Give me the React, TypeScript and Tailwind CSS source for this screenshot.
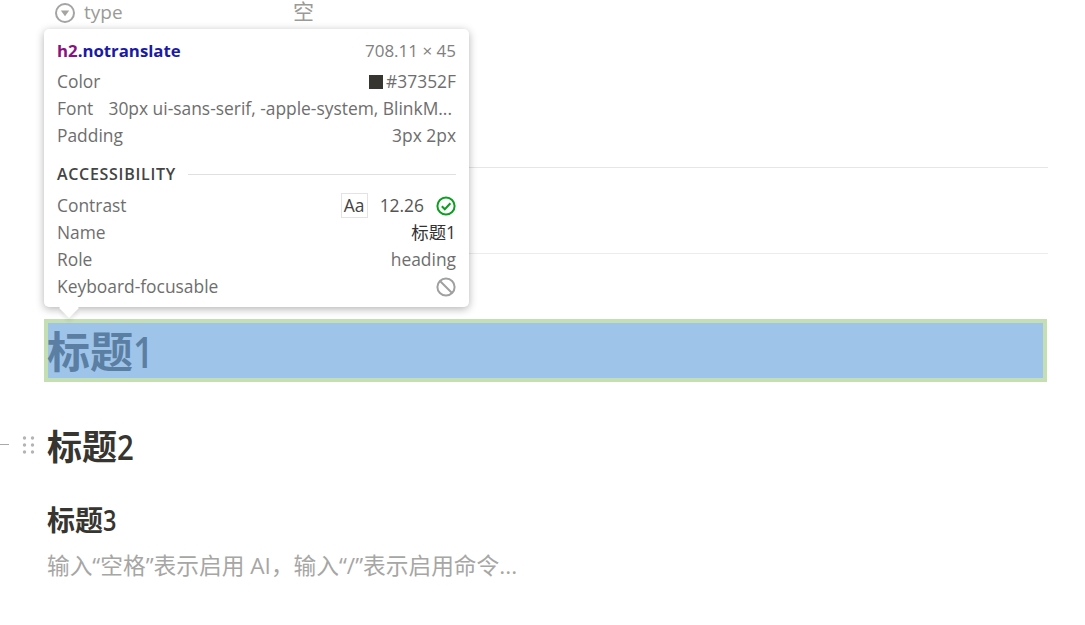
const sans = "font-['Open_Sans','Noto_Sans_CJK_SC',sans-serif]";

function Row({ label, children }: { label: string; children: React.ReactNode }) {
  return (
    <div className="flex h-[27px] items-center justify-between text-[#6e6e6e]">
      <span className="whitespace-nowrap">{label}</span>
      {children}
    </div>
  );
}

function Digit({ width, children }: { width: string; children: React.ReactNode }) {
  return <span className={`inline-block origin-left scale-x-[0.84] font-semibold ${width}`}>{children}</span>;
}

function Inspector() {
  return (
    <div className="absolute left-[44px] top-[29px] h-[278px] w-[425px] rounded-[5px] bg-white px-[13px] pt-[7px] text-[17.4px] leading-[27px] shadow-[0_2px_8px_rgba(0,0,0,0.3)]">
      <div className="mb-[4px] flex h-[28px] items-center justify-between">
        <span className="text-[16.8px] font-bold text-[#1a1aa6]">
          <span className="text-[#881280]">h2</span>.notranslate
        </span>
        <span className="text-[17px] text-[#808080]">708.11 × 45</span>
      </div>
      <Row label="Color">
        <span className="flex items-center gap-[3px]">
          <span className="h-[14px] w-[14px] bg-[#37352f]" />
          #37352F
        </span>
      </Row>
      <Row label="Font">
        <span className="mr-[4px] whitespace-nowrap">30px ui-sans-serif, -apple-system, BlinkM...</span>
      </Row>
      <Row label="Padding">
        <span>3px 2px</span>
      </Row>
      <div className="mb-[4px] mt-[12px] flex h-[27px] items-center gap-[12px]">
        <span className="text-[16px] font-semibold tracking-[0.7px] text-[#444]">ACCESSIBILITY</span>
        <span className="h-px flex-1 bg-[#e0e0e0]" />
      </div>
      <Row label="Contrast">
        <span className="flex items-center">
          <span className="mr-[12px] flex h-[25px] w-[27px] items-center justify-center border border-[#e3e3e3] text-[#444]">Aa</span>
          <span className="mr-[12px] text-[#555]">12.26</span>
          <svg width="20" height="20" viewBox="0 0 20 20" fill="none" stroke="#0a9f1e" strokeWidth="2">
            <circle cx="10" cy="10" r="8.6" />
            <path d="M5.8 10.2l3 3 5.6-6" />
          </svg>
        </span>
      </Row>
      <Row label="Name">
        <span className="text-[#333]">标题1</span>
      </Row>
      <Row label="Role">
        <span>heading</span>
      </Row>
      <Row label="Keyboard-focusable">
        <svg width="20" height="20" viewBox="0 0 20 20" fill="none" stroke="#a0a0a0" strokeWidth="2">
          <circle cx="10" cy="10" r="8.6" />
          <path d="M4 4l12 12" />
        </svg>
      </Row>
      <span className="absolute left-[18px] top-[272px] h-[14px] w-[14px] rotate-45 bg-white shadow-[3px_3px_4px_rgba(0,0,0,0.08)]" />
    </div>
  );
}

export default function App() {
  return (
    <div className={`relative h-[625px] w-[1085px] overflow-hidden bg-white ${sans}`}>
      <div className="ml-[44px] w-[1004px]">
        <div className="flex h-[25px] items-center pl-[11px] text-[19px] leading-[25px] text-[#9b9a97]">
          <svg width="20" height="20" viewBox="0 0 20 20" fill="none">
            <circle cx="10" cy="10" r="9" stroke="#a5a4a1" strokeWidth="2" />
            <path d="M5.8 7.6h8.4L10 13.2z" fill="#a5a4a1" />
          </svg>
          <span className="ml-[9px] w-[209px]">type</span>
          <span className="mb-[3px] text-[21px] leading-[22px]">空</span>
        </div>
        <div className="mt-[142px] h-px bg-[#e6e6e6]" />
        <div className="mt-[85px] h-px bg-[#ececec]" />
        <div className="mr-px mt-[65px] flex h-[63px] items-center border-[4px] border-[#c5dfb5] bg-[#9fc4e9] pt-[2px] text-[43px] leading-[55px] font-bold text-[#5a7fa3]">
          <span className="-ml-px whitespace-nowrap">标题<Digit width="w-[20px]">1</Digit></span>
        </div>
        <div className="relative mt-[42px] flex h-[45px] items-center pl-[3px] text-[35px] leading-[45px] font-bold text-[#37352f]">
          <span className="absolute left-[-44px] top-[20px] h-px w-[9px] bg-[#aaa]" />
          <svg className="absolute left-[-22px] top-[11px]" width="14" height="20" viewBox="0 0 14 20" fill="#b4b4b4">
            <circle cx="2.5" cy="3" r="1.7" /><circle cx="10.5" cy="3" r="1.7" />
            <circle cx="2.5" cy="10" r="1.7" /><circle cx="10.5" cy="10" r="1.7" />
            <circle cx="2.5" cy="17" r="1.7" /><circle cx="10.5" cy="17" r="1.7" />
          </svg>
          <span className="whitespace-nowrap">标题<Digit width="w-[17px]">2</Digit></span>
        </div>
        <div className="mt-[33px] flex h-[36px] items-center pl-[3px] text-[28px] leading-[36px] font-bold text-[#37352f]">
          <span className="whitespace-nowrap">标题<Digit width="w-[15px]">3</Digit></span>
        </div>
        <div className="mt-[11px] whitespace-nowrap pl-[3px] text-[22.7px] leading-[34px] text-[#a6a6a4]">
          输入“空格”表示启用 AI，输入“/”表示启用命令...
        </div>
      </div>
      <Inspector />
    </div>
  );
}
